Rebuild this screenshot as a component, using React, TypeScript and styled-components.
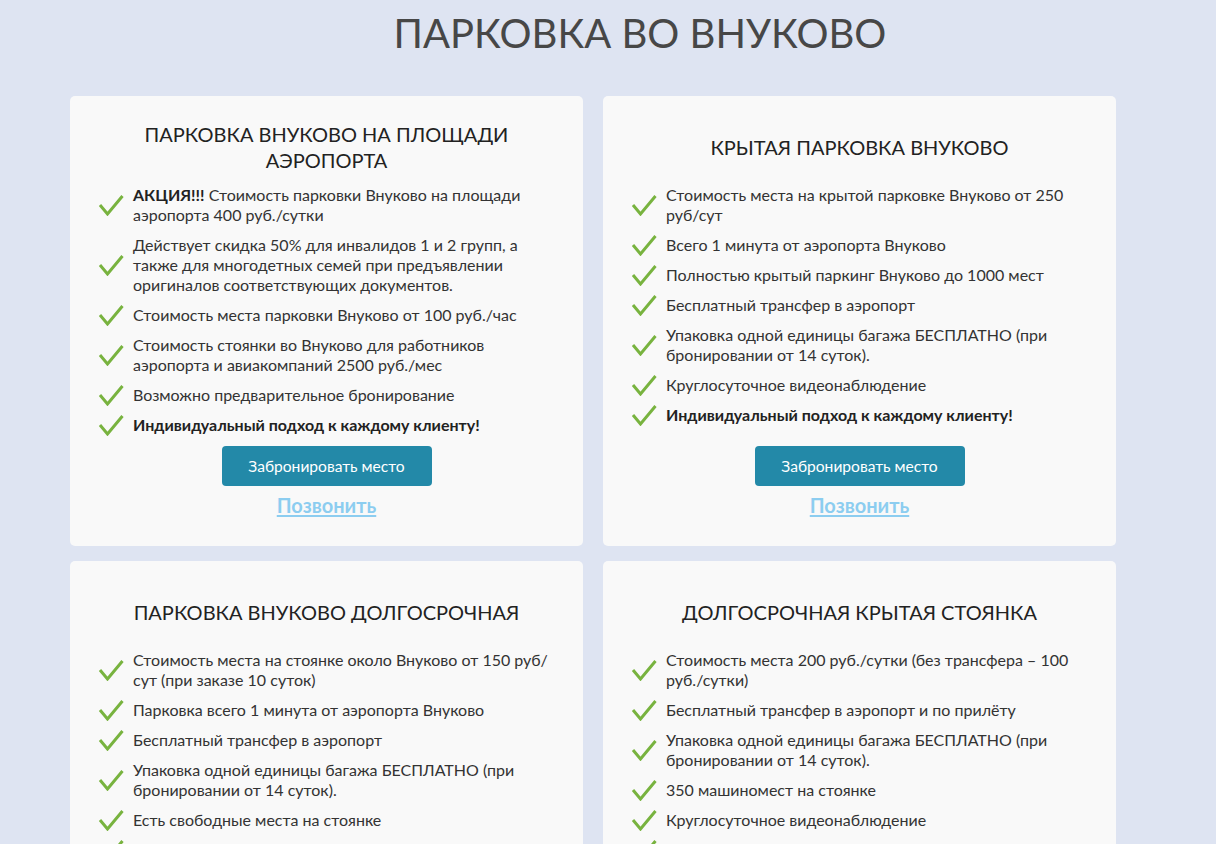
import React from "react";
import styled, { createGlobalStyle } from "styled-components";

const GlobalStyle = createGlobalStyle`
  html, body {
    margin: 0;
    padding: 0;
    background: #dee4f2;
    font-family: Lato, "Open Sans", "Noto Sans", sans-serif;
    color: #333;
  }
  * { box-sizing: border-box; }
`;

const Page = styled.div`
  min-height: 844px;
  padding-bottom: 40px;
`;

const PageTitle = styled.h1`
  margin: 0 0 38px;
  padding: 8px 0 0 64px;
  text-align: center;
  font-size: 40px;
  line-height: 50px;
  font-weight: 400;
  color: #474747;
`;

const Grid = styled.div`
  display: grid;
  grid-template-columns: 513px 513px;
  column-gap: 20px;
  row-gap: 15px;
  padding: 0 100px 0 70px;
`;

const Card = styled.section`
  background: #f9f9f9;
  border-radius: 5px;
  padding: 25px 28px 29px 28px;
  display: flex;
  flex-direction: column;
`;

const CardTitle = styled.h2`
  margin: 0 0 12px;
  min-height: 52px;
  display: flex;
  align-items: center;
  justify-content: center;
  text-align: center;
  font-size: 20px;
  line-height: 26px;
  font-weight: 400;
  color: #222;
  padding: 0 10px;
`;

const List = styled.ul`
  list-style: none;
  margin: 0;
  padding: 0;
  display: flex;
  flex-direction: column;
  gap: 10px;
`;

const Item = styled.li`
  display: flex;
  align-items: center;
  gap: 9px;
  font-size: 16px;
  line-height: 20px;
  color: #333;
`;

const CheckBox = styled.span`
  flex: 0 0 26px;
  width: 26px;
  height: 20px;
  display: flex;
  align-items: center;
  justify-content: center;
  overflow: visible;
`;

const ItemText = styled.span<{ $bold?: boolean }>`
  font-weight: ${(p) => (p.$bold ? 700 : 400)};
  color: ${(p) => (p.$bold ? "#222" : "#333")};
  b { font-weight: 700; color: #222; }
`;

const Footer = styled.div`
  margin-top: auto;
  padding-top: 11px;
  display: flex;
  flex-direction: column;
  align-items: center;
  gap: 7px;
`;

const BookButton = styled.button`
  width: 210px;
  height: 40px;
  border: none;
  border-radius: 4px;
  background: #2389a8;
  color: #fff;
  font-family: Lato, "Open Sans", sans-serif;
  font-size: 15.6px;
  cursor: pointer;
`;

const CallLink = styled.a`
  font-size: 20px;
  line-height: 24px;
  font-weight: 700;
  color: #8ccdf0;
  text-decoration: underline;
  text-underline-offset: 2px;
  cursor: pointer;
`;

const Check = () => (
  <CheckBox>
    <svg width="26" height="22" viewBox="0 0 26 22" fill="none" style={{ flexShrink: 0 }}>
      <polyline
        points="2,11 9.5,20 24.5,2"
        stroke="#78b33f"
        strokeWidth="3"
        strokeLinecap="butt"
        strokeLinejoin="miter"
      />
    </svg>
  </CheckBox>
);

type Entry = { text: React.ReactNode; bold?: boolean };

const cards: { title: string; items: Entry[] }[] = [
  {
    title: "ПАРКОВКА ВНУКОВО НА ПЛОЩАДИ АЭРОПОРТА",
    items: [
      {
        text: (
          <>
            <b>АКЦИЯ!!!</b> Стоимость парковки Внуково на площади аэропорта 400 руб./сутки
          </>
        ),
      },
      {
        text: "Действует скидка 50% для инвалидов 1 и 2 групп, а также для многодетных семей при предъявлении оригиналов соответствующих документов.",
      },
      { text: "Стоимость места парковки Внуково от 100 руб./час" },
      { text: "Стоимость стоянки во Внуково для работников аэропорта и авиакомпаний 2500 руб./мес" },
      { text: "Возможно предварительное бронирование" },
      { text: "Индивидуальный подход к каждому клиенту!", bold: true },
    ],
  },
  {
    title: "КРЫТАЯ ПАРКОВКА ВНУКОВО",
    items: [
      { text: "Стоимость места на крытой парковке Внуково от 250 руб/сут" },
      { text: "Всего 1 минута от аэропорта Внуково" },
      { text: "Полностью крытый паркинг Внуково до 1000 мест" },
      { text: "Бесплатный трансфер в аэропорт" },
      { text: "Упаковка одной единицы багажа БЕСПЛАТНО (при бронировании от 14 суток)." },
      { text: "Круглосуточное видеонаблюдение" },
      { text: "Индивидуальный подход к каждому клиенту!", bold: true },
    ],
  },
  {
    title: "ПАРКОВКА ВНУКОВО ДОЛГОСРОЧНАЯ",
    items: [
      { text: "Стоимость места на стоянке около Внуково от 150 руб/сут (при заказе 10 суток)" },
      { text: "Парковка всего 1 минута от аэропорта Внуково" },
      { text: "Бесплатный трансфер в аэропорт" },
      { text: "Упаковка одной единицы багажа БЕСПЛАТНО (при бронировании от 14 суток)." },
      { text: "Есть свободные места на стоянке" },
      { text: "Индивидуальный подход к каждому клиенту!", bold: true },
    ],
  },
  {
    title: "ДОЛГОСРОЧНАЯ КРЫТАЯ СТОЯНКА",
    items: [
      { text: "Стоимость места 200 руб./сутки (без трансфера – 100 руб./сутки)" },
      { text: "Бесплатный трансфер в аэропорт и по прилёту" },
      { text: "Упаковка одной единицы багажа БЕСПЛАТНО (при бронировании от 14 суток)." },
      { text: "350 машиномест на стоянке" },
      { text: "Круглосуточное видеонаблюдение" },
      { text: "Индивидуальный подход к каждому клиенту!", bold: true },
    ],
  },
];

export default function App() {
  return (
    <Page>
      <GlobalStyle />
      <PageTitle>ПАРКОВКА ВО ВНУКОВО</PageTitle>
      <Grid>
        {cards.map((c) => (
          <Card key={c.title}>
            <CardTitle>{c.title}</CardTitle>
            <List>
              {c.items.map((it, i) => (
                <Item key={i}>
                  <Check />
                  <ItemText $bold={it.bold}>{it.text}</ItemText>
                </Item>
              ))}
            </List>
            <Footer>
              <BookButton>Забронировать место</BookButton>
              <CallLink>Позвонить</CallLink>
            </Footer>
          </Card>
        ))}
      </Grid>
    </Page>
  );
}
